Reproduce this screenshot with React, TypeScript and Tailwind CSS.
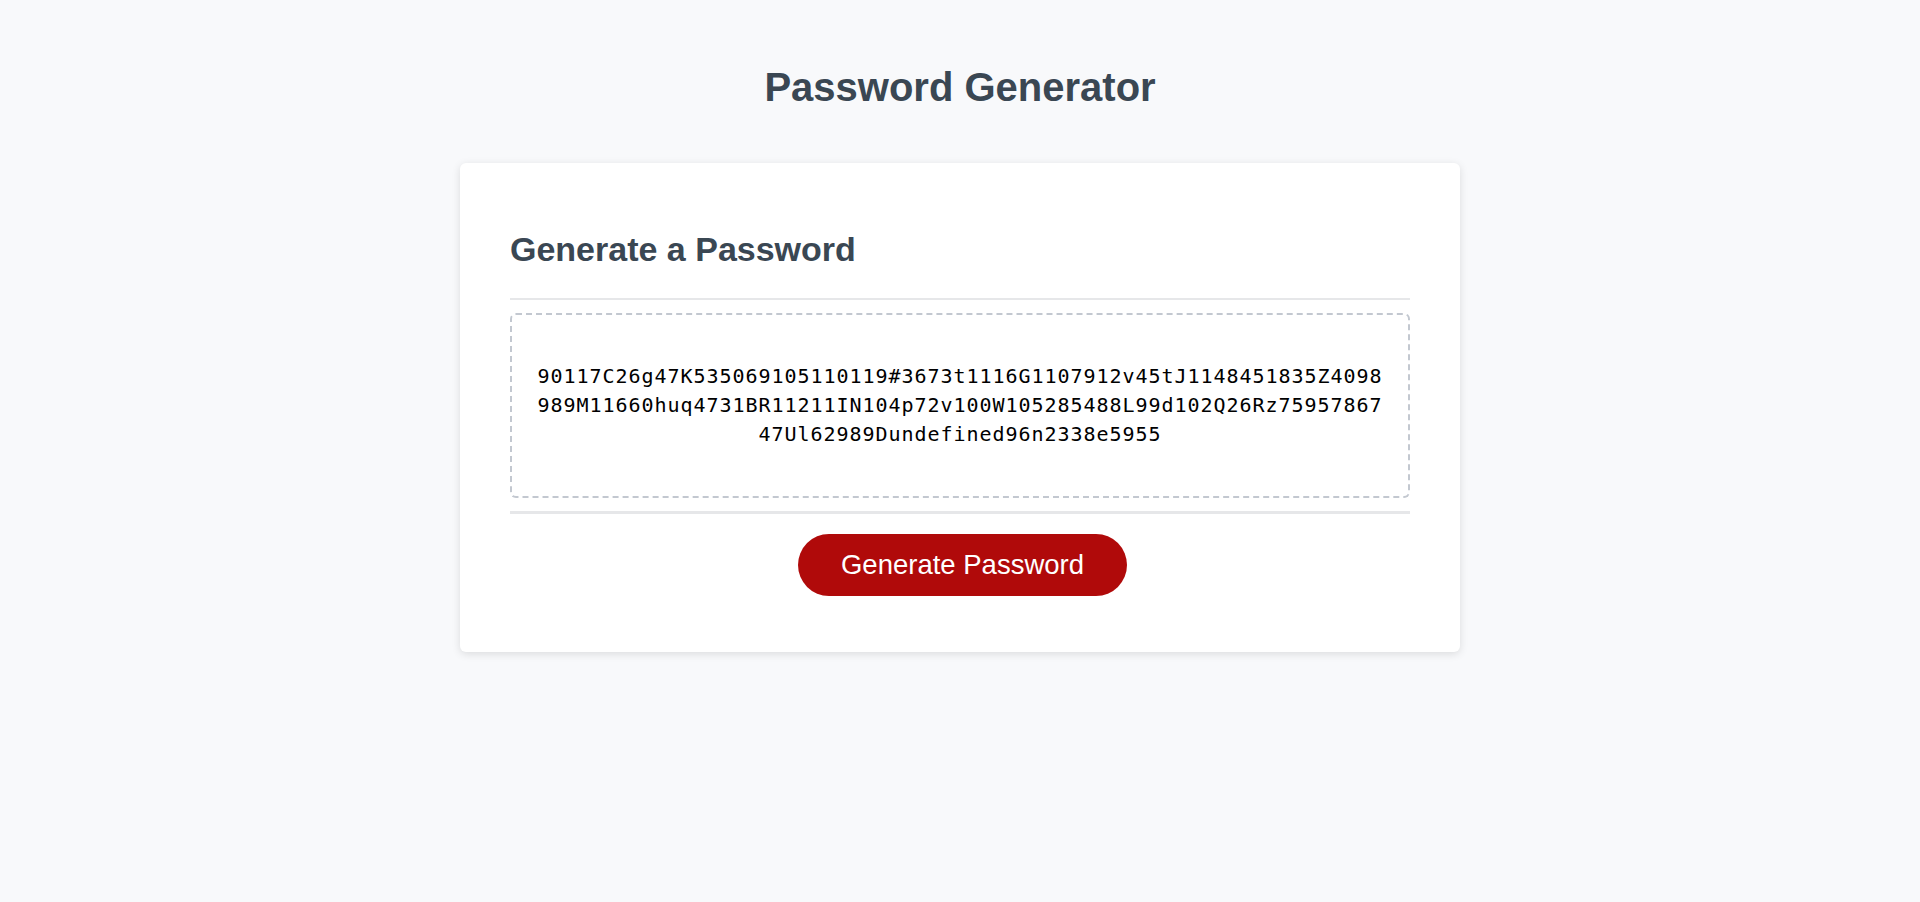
import { useState } from "react";

const FIRST =
    "90117C26g47K535069105110119#3673t1116G1107912v45tJ1148451835Z4098989M11660huq4731BR11211IN104p72v100W105285488L99d102Q26Rz7595786747Ul62989Dundefined96n2338e5955";

const App: React.FC = () => {
    const [password, setPassword] = useState(FIRST);

    const generate = () => {
        const chars = "ABCDEFGHIJKLMNOPQRSTUVWXYZabcdefghijklmnopqrstuvwxyz0123456789#";
        let out = "";
        for (let i = 0; i < 160; i++) {
            out += chars[Math.floor(Math.random() * chars.length)];
        }
        setPassword(out);
    };

    return (
        <div className="min-h-screen w-full bg-[#f8f9fb] pt-[63px] font-['Liberation_Sans',Arial,sans-serif]">
            <h1 className="text-center text-[40px] leading-[48px] font-bold text-[#3a4753]">
                Password Generator
            </h1>

            <div className="mx-auto mt-[52px] w-[1000px] rounded-md bg-white px-[50px] pt-[66px] pb-[56px] shadow-[0_2px_8px_rgba(0,0,0,0.12)]">
                <h2 className="text-[34px] leading-[40px] font-bold text-[#3a4753]">
                    Generate a Password
                </h2>

                <div className="mt-[29px] h-[2px] bg-[#e6e7e9]" />

                <div className="mt-[13px] flex h-[185px] items-center justify-center rounded-md border-2 border-dashed border-[#c3c8d0]">
                    <p className="w-[850px] break-all text-center font-['DejaVu_Sans_Mono',monospace] text-[20px] leading-[29px] tracking-[0.96px] text-black">
                        {password}
                    </p>
                </div>

                <div className="mt-[13px] h-[3px] bg-[#e6e7e9]" />

                <div className="mt-[20px] flex justify-center">
                    <button
                        onClick={generate}
                        className="ml-[5px] h-[62px] w-[329px] cursor-pointer rounded-full bg-[#b00a0a] text-[27.5px] text-white"
                    >
                        Generate Password
                    </button>
                </div>
            </div>
        </div>
    );
};

export default App;
